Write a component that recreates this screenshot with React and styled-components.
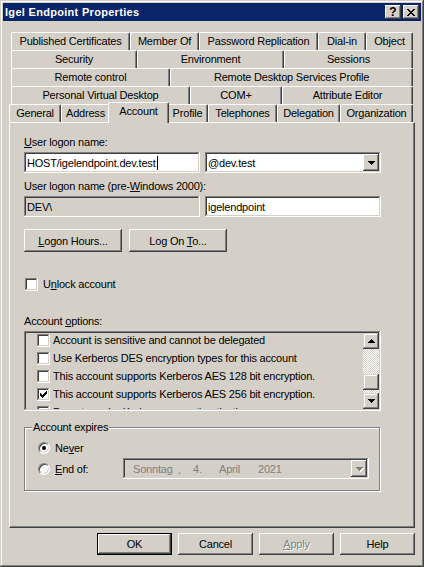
import React from 'react'
import styled, { createGlobalStyle, css } from 'styled-components'

const FACE = '#D4D0C8'
const SHADOW = '#808080'
const DARK = '#404040'

const GlobalStyle = createGlobalStyle`
  html, body {
    margin: 0;
    padding: 0;
    background: ${FACE};
  }
  body {
    font-family: "Liberation Sans", Arial, sans-serif;
    font-size: 11px;
    letter-spacing: -0.2px;
    color: #000;
  }
`

const raised = css`
  box-shadow: inset -1px -1px ${DARK}, inset 1px 1px #fff, inset -2px -2px ${SHADOW}, inset 2px 2px ${FACE};
`
const sunken = css`
  box-shadow: inset -1px -1px #fff, inset 1px 1px ${SHADOW}, inset -2px -2px ${FACE}, inset 2px 2px ${DARK};
`

// little bitmap glyphs (classic windows look)
const pixPath = (map) =>
  map.map((row, y) => row.split('').map((c, x) => (c === '#' ? `M${x} ${y}h1v1h-1z` : '')).join('')).join('')

const CHECK = ['......#', '.....##', '#...###', '##.###.', '#####..', '.###...', '..#....']
const CLOSE = ['##....##', '.##..##.', '..####..', '...##...', '..####..', '.##..##.', '##....##']
const DOWN = ['#######', '.#####.', '..###..', '...#...']
const UP = [...DOWN].reverse()

const Glyph = styled.svg`
  display: block;
  shape-rendering: crispEdges;
  fill: ${(p) => p.$color || '#000'};
  overflow: visible;
`

function Bitmap({ map, color, emboss }) {
  const w = map[0].length
  const h = map.length
  return (
    <Glyph width={w} height={h} viewBox={`0 0 ${w} ${h}`} $color={color}>
      {emboss && <path d={pixPath(map)} transform="translate(1 1)" fill="#fff" />}
      <path d={pixPath(map)} />
    </Glyph>
  )
}

const Window = styled.div`
  width: 424px;
  height: 567px;
  box-sizing: border-box;
  padding: 3px;
  background: ${FACE};
  box-shadow: inset -1px -1px ${DARK}, inset 1px 1px ${FACE}, inset -2px -2px ${SHADOW}, inset 2px 2px #fff;
  display: flex;
  flex-direction: column;
`

const TitleBar = styled.div`
  height: 18px;
  background: #0a246a;
  color: #fff;
  display: flex;
  align-items: center;
  padding: 0 2px 0 2px;
`

const TitleText = styled.div`
  flex: 1;
  font-weight: bold;
  line-height: 18px;
  letter-spacing: 0.3px;
`

const CaptionButton = styled.div`
  width: 16px;
  height: 14px;
  box-sizing: border-box;
  background: ${FACE};
  ${raised};
  margin-left: ${(p) => p.$gap || 0}px;
  display: flex;
  align-items: center;
  justify-content: center;
  color: #000;
  font-weight: bold;
  font-size: 12px;
  letter-spacing: 0;
  line-height: 14px;
`

const Body = styled.div`
  flex: 1;
  padding: 11px 6px 0;
  display: flex;
  flex-direction: column;
`

const TabStrip = styled.div`
  display: flex;
  flex-direction: column;
`

const TabRow = styled.div`
  display: flex;
  align-items: flex-end;
  height: 18px;
  margin-left: ${(p) => p.$inset}px;
`

const Tab = styled.div`
  width: ${(p) => p.$w}px;
  height: 18px;
  flex: none;
  box-sizing: border-box;
  border-top: 1px solid #fff;
  border-left: 1px solid #fff;
  border-right: 1px solid ${DARK};
  border-top-left-radius: 2px;
  border-top-right-radius: 2px;
  box-shadow: inset -1px 0 ${SHADOW};
  background: ${FACE};
  text-align: center;
  line-height: 17px;
  white-space: nowrap;

  ${(p) =>
    p.$active &&
    css`
      width: ${p.$w + 4}px;
      height: 21px;
      margin: 0 -2px -1px;
      position: relative;
      z-index: 1;
    `}
`

const Panel = styled.div`
  height: 406px;
  box-sizing: border-box;
  border-top: 1px solid #fff;
  border-left: 1px solid #fff;
  border-right: 1px solid ${DARK};
  border-bottom: 1px solid ${DARK};
  box-shadow: inset -1px -1px ${SHADOW};
  padding: 13px 0 0 14px;
  display: flex;
  flex-direction: column;
`

const Label = styled.div`
  line-height: 13px;
  height: 13px;
  margin-top: ${(p) => p.$top || 0}px;
  white-space: nowrap;
`

const FieldRow = styled.div`
  display: flex;
  gap: 5px;
  margin-top: 3px;
`

const TextField = styled.div`
  width: 176px;
  height: 21px;
  box-sizing: border-box;
  background: ${(p) => (p.$disabled ? FACE : '#fff')};
  ${sunken};
  padding: 0 3px;
  line-height: 20px;
  display: flex;
  align-items: center;
  white-space: nowrap;
`

const Caret = styled.span`
  display: inline-block;
  width: 1px;
  height: 14px;
  background: #000;
  margin-left: 1px;
`

const Combo = styled(TextField)`
  padding: 0 2px 0 3px;
`

const ComboText = styled.span`
  flex: 1;
`

const DropButton = styled.div`
  width: 16px;
  height: 17px;
  box-sizing: border-box;
  background: ${FACE};
  ${raised};
  display: flex;
  align-items: center;
  justify-content: center;
  flex: none;
`

const ButtonRow = styled.div`
  display: flex;
  gap: ${(p) => p.$gap || 7}px;
  margin-top: ${(p) => p.$top || 0}px;
  justify-content: ${(p) => p.$justify || 'flex-start'};
`

const PushButton = styled.div`
  width: ${(p) => p.$w}px;
  height: ${(p) => p.$h || 23}px;
  box-sizing: border-box;
  background: ${FACE};
  display: flex;
  align-items: center;
  justify-content: center;
  white-space: nowrap;
  ${(p) =>
    p.$default
      ? css`
          box-shadow: inset 0 0 0 1px #000, inset -2px -2px ${DARK}, inset 2px 2px #fff, inset -3px -3px ${SHADOW},
            inset 3px 3px ${FACE};
        `
      : raised};
  color: ${(p) => (p.$disabled ? SHADOW : '#000')};
  text-shadow: ${(p) => (p.$disabled ? '1px 1px 0 #fff' : 'none')};
`

const CheckRow = styled.div`
  display: flex;
  align-items: flex-start;
  gap: ${(p) => p.$gap || 5}px;
  margin-top: ${(p) => p.$top || 0}px;
  padding-left: ${(p) => p.$indent || 0}px;
  line-height: 13px;
  height: ${(p) => p.$h || 13}px;
  box-sizing: border-box;
  padding-top: ${(p) => p.$pt || 0}px;
  white-space: nowrap;
`

const CheckBox = styled.span`
  width: 13px;
  height: 13px;
  box-sizing: border-box;
  flex: none;
  background: #fff;
  ${sunken};
  display: flex;
  align-items: center;
  justify-content: center;
`

function Check({ checked }) {
  return <CheckBox>{checked && <Bitmap map={CHECK} />}</CheckBox>
}

const ListBox = styled.div`
  width: 357px;
  height: 80px;
  box-sizing: border-box;
  margin-top: 3px;
  padding: 2px;
  ${sunken};
  display: flex;
`

const ListItems = styled.div`
  flex: 1;
  overflow: hidden;
  padding-left: 11px;
`

const ScrollBar = styled.div`
  width: 16px;
  display: flex;
  flex-direction: column;
`

const ScrollArrow = styled.div`
  height: 16px;
  flex: none;
  box-sizing: border-box;
  background: ${FACE};
  box-shadow: inset -1px -1px ${DARK}, inset 1px 1px ${FACE}, inset -2px -2px ${SHADOW}, inset 2px 2px #fff;
  display: flex;
  align-items: center;
  justify-content: center;
`

const Track = styled.div`
  flex: ${(p) => (p.$grow ? 1 : 'none')};
  height: ${(p) => (p.$grow ? 'auto' : `${p.$h}px`)};
  background: repeating-conic-gradient(#fff 0 25%, ${FACE} 0 50%) 0 0 / 2px 2px;
`

const Thumb = styled(ScrollArrow)``

const GroupBox = styled.fieldset`
  width: 356px;
  box-sizing: border-box;
  min-width: 0;
  margin: 10px 0 0;
  padding: 4px 0 11px 7px;
  border: 1px solid ${SHADOW};
  box-shadow: inset 1px 1px #fff, 1px 1px #fff;
`

const Legend = styled.legend`
  padding: 0 1px;
  line-height: 13px;
  background: ${FACE};
`

const RadioRow = styled.div`
  display: flex;
  align-items: center;
  gap: 5px;
  height: ${(p) => p.$h}px;
  padding-left: 6px;
  white-space: nowrap;
`

const Radio = styled.span`
  width: 12px;
  height: 12px;
  box-sizing: border-box;
  flex: none;
  border-radius: 50%;
  background: #fff;
  border: 1px solid;
  border-color: ${SHADOW} #fff #fff ${SHADOW};
  box-shadow: inset 1px 1px ${DARK}, inset -1px -1px ${FACE};
  display: flex;
  align-items: center;
  justify-content: center;

  &::after {
    content: '';
    width: 4px;
    height: 4px;
    border-radius: 50%;
    background: #000;
    display: ${(p) => (p.$on ? 'block' : 'none')};
  }
`

const RadioLabel = styled.span`
  width: ${(p) => p.$w || 'auto'};
`

const DatePicker = styled(TextField)`
  width: 246px;
  background: ${FACE};
  color: ${SHADOW};
  padding: 0 2px 0 10px;
`

const DateSeg = styled.span`
  width: ${(p) => (p.$w ? `${p.$w}px` : 'auto')};
  flex: ${(p) => (p.$w ? 'none' : 1)};
`

const Footer = styled(ButtonRow)``

const tabRows = [
  {
    inset: 2,
    tabs: [
      ['Published Certificates', 119],
      ['Member Of', 69],
      ['Password Replication', 119],
      ['Dial-in', 48],
      ['Object', 47],
    ],
  },
  {
    inset: 2,
    tabs: [
      ['Security', 126],
      ['Environment', 147],
      ['Sessions', 129],
    ],
  },
  {
    inset: 2,
    tabs: [
      ['Remote control', 159],
      ['Remote Desktop Services Profile', 243],
    ],
  },
  {
    inset: 2,
    tabs: [
      ['Personal Virtual Desktop', 179],
      ['COM+', 92],
      ['Attribute Editor', 131],
    ],
  },
  {
    inset: 0,
    tabs: [
      ['General', 52],
      ['Address', 49],
      ['Account', 57, true],
      ['Profile', 41],
      ['Telephones', 69],
      ['Delegation', 63],
      ['Organization', 73],
    ],
  },
]

const options = [
  ['Account is sensitive and cannot be delegated', false],
  ['Use Kerberos DES encryption types for this account', false],
  ['This account supports Kerberos AES 128 bit encryption.', false],
  ['This account supports Kerberos AES 256 bit encryption.', true],
  ['Do not require Kerberos preauthentication', false],
]

export default function App() {
  return (
    <>
      <GlobalStyle />
      <Window>
        <TitleBar>
          <TitleText>Igel Endpoint Properties</TitleText>
          <CaptionButton>?</CaptionButton>
          <CaptionButton $gap={2}>
            <Bitmap map={CLOSE} />
          </CaptionButton>
        </TitleBar>

        <Body>
          <TabStrip>
            {tabRows.map((row, i) => (
              <TabRow key={i} $inset={row.inset}>
                {row.tabs.map(([name, w, active]) => (
                  <Tab key={name} $w={w} $active={active}>
                    {name}
                  </Tab>
                ))}
              </TabRow>
            ))}
          </TabStrip>

          <Panel>
            <Label>
              <u>U</u>ser logon name:
            </Label>
            <FieldRow>
              <TextField>
                HOST/igelendpoint.dev.test
                <Caret />
              </TextField>
              <Combo>
                <ComboText>@dev.test</ComboText>
                <DropButton>
                  <Bitmap map={DOWN} />
                </DropButton>
              </Combo>
            </FieldRow>

            <Label $top={7}>
              User logon name (pre-<u>W</u>indows 2000):
            </Label>
            <FieldRow>
              <TextField $disabled>{'DEV\\'}</TextField>
              <TextField>igelendpoint</TextField>
            </FieldRow>

            <ButtonRow $top={12}>
              <PushButton $w={98}>
                <span>
                  <u>L</u>ogon Hours...
                </span>
              </PushButton>
              <PushButton $w={98}>
                <span>
                  Log On <u>T</u>o...
                </span>
              </PushButton>
            </ButtonRow>

            <CheckRow $top={26} $indent={1}>
              <Check />
              <span>
                U<u>n</u>lock account
              </span>
            </CheckRow>

            <Label $top={24}>
              Account <u>o</u>ptions:
            </Label>
            <ListBox>
              <ListItems>
                {options.map(([text, on]) => (
                  <CheckRow key={text} $h={18} $pt={1} $gap={3}>
                    <Check checked={on} />
                    <span>{text}</span>
                  </CheckRow>
                ))}
              </ListItems>
              <ScrollBar>
                <ScrollArrow>
                  <Bitmap map={UP} />
                </ScrollArrow>
                <Track $grow />
                <Thumb />
                <Track $h={3} />
                <ScrollArrow>
                  <Bitmap map={DOWN} />
                </ScrollArrow>
              </ScrollBar>
            </ListBox>

            <GroupBox>
              <Legend>Account expires</Legend>
              <RadioRow $h={20}>
                <Radio $on />
                <span>
                  Ne<u>v</u>er
                </span>
              </RadioRow>
              <RadioRow $h={21}>
                <Radio />
                <RadioLabel $w="63px">
                  <u>E</u>nd of:
                </RadioLabel>
                <DatePicker>
                  <DateSeg $w={45}>Sonntag</DateSeg>
                  <DateSeg $w={15}>,</DateSeg>
                  <DateSeg $w={26}>4.</DateSeg>
                  <DateSeg $w={39}>April</DateSeg>
                  <DateSeg>2021</DateSeg>
                  <DropButton>
                    <Bitmap map={DOWN} color={SHADOW} emboss />
                  </DropButton>
                </DatePicker>
              </RadioRow>
            </GroupBox>
          </Panel>

          <Footer $top={5} $gap={6} $justify="flex-end">
            <PushButton $w={75} $h={22} $default>
              OK
            </PushButton>
            <PushButton $w={75} $h={22}>
              Cancel
            </PushButton>
            <PushButton $w={75} $h={22} $disabled>
              <span>
                <u>A</u>pply
              </span>
            </PushButton>
            <PushButton $w={75} $h={22}>
              Help
            </PushButton>
          </Footer>
        </Body>
      </Window>
    </>
  )
}
